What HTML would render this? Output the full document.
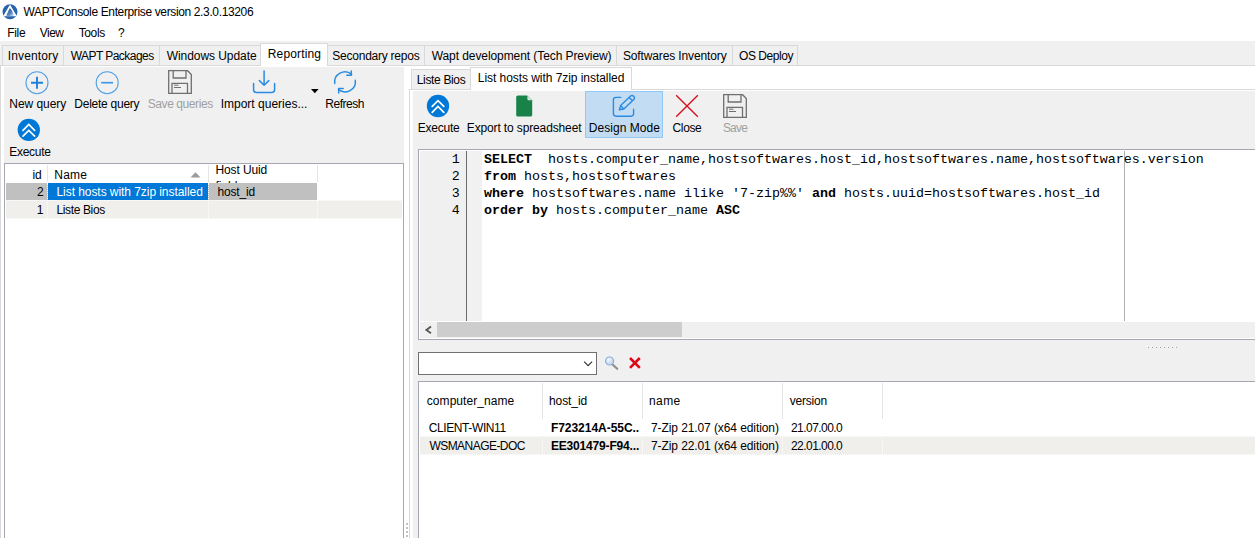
<!DOCTYPE html>
<html lang="en"><head><meta charset="utf-8"><title>WAPTConsole Enterprise version 2.3.0.13206</title>
<style>
html,body{margin:0;padding:0}
body{width:1255px;height:538px;overflow:hidden;background:#fff;position:relative;font:12px/20px "Liberation Sans",sans-serif;color:#000}
.a{position:absolute;box-sizing:border-box}
.t{position:absolute;white-space:pre;height:20px;line-height:20px}
.tab{position:absolute;box-sizing:border-box;top:45px;height:21px;background:#f0f0f0;border:1px solid #d9d9d9;border-bottom:none}
.m{position:absolute;white-space:pre;font:13.333px/17px "Liberation Mono",monospace;height:17px;color:#000}
.m b{font-weight:700}
svg{position:absolute;overflow:visible}
</style></head><body>
<!-- window chrome -->
<div class="a" style="left:0;top:41px;width:1255px;height:497px;background:#f0f0f0"></div>
<svg style="left:2px;top:4px" width="17" height="16" viewBox="0 0 17 16"><defs><linearGradient id="g1" x1="0.2" y1="0" x2="1" y2="1"><stop offset="0" stop-color="#1f59a4"/><stop offset="0.55" stop-color="#4f82c0"/><stop offset="1" stop-color="#e8eff8"/></linearGradient></defs><circle cx="8" cy="7.7" r="7.5" fill="#2762aa"/><path d="M8 0.6 L1.1 12.3 L14.9 12.3 Z" fill="#fff"/><path d="M7.8 3.9 L4.3 11.6 Q8 12.6 12 11.6 L9.9 6.6 Z" fill="url(#g1)"/></svg>

<!-- main tabs -->
<div class="a" style="left:0;top:65px;width:1260px;height:480px;background:#fff;border:1px solid #d9d9d9"></div>
<div class="tab" style="left:2px;width:62px"></div>
<div class="tab" style="left:63px;width:97px"></div>
<div class="tab" style="left:159px;width:102px"></div>
<div class="tab" style="left:327px;width:98px"></div>
<div class="tab" style="left:424px;width:193px"></div>
<div class="tab" style="left:616px;width:117px"></div>
<div class="tab" style="left:732px;width:66px"></div>
<div class="a" style="left:0;top:65px;width:1260px;height:1px;background:#d9d9d9"></div>
<div class="a" style="left:260px;top:43px;width:68px;height:23px;background:#fff;border:1px solid #d9d9d9;border-bottom:none"></div>

<!-- left pane -->
<div class="a" style="left:4px;top:67px;width:400px;height:100px;background:#f0f0f0"></div>
<div class="a" style="left:4px;top:163px;width:400px;height:380px;background:#fff;border:1px solid #a5a8b3"></div>
<!-- left grid rows -->
<div class="a" style="left:47px;top:165px;width:1px;height:17px;background:#e5e5e5"></div>
<div class="a" style="left:208px;top:165px;width:1px;height:17px;background:#e5e5e5"></div>
<div class="a" style="left:317px;top:165px;width:1px;height:17px;background:#e5e5e5"></div>
<div class="a" style="left:6px;top:183px;width:311px;height:17px;background:#c0c0c0"></div>
<div class="a" style="left:48px;top:183px;width:160px;height:17px;background:#0078d7"></div>
<div class="a" style="left:6px;top:200px;width:396px;height:19px;background:#f0efec"></div><div class="a" style="left:6px;top:200px;width:396px;height:1px;background:repeating-linear-gradient(90deg,#fff 0 1px,#f0efec 1px 2px)"></div><div class="a" style="left:6px;top:218px;width:396px;height:1px;background:repeating-linear-gradient(90deg,#fff 0 1px,#f0efec 1px 2px)"></div>
<div class="a" style="left:47px;top:183px;width:1px;height:36px;border-left:1px dotted #fff"></div>
<div class="a" style="left:208px;top:183px;width:1px;height:36px;border-left:1px dotted #fff"></div>
<div class="a" style="left:317px;top:183px;width:1px;height:36px;border-left:1px dotted #fff"></div>
<div class="a" style="left:215px;top:165px;width:60px;height:18px;overflow:hidden"><div class="t" style="left:0.4px;top:-5px;letter-spacing:-0.1px">Host Uuid</div><div class="t" style="left:0.4px;top:11px">field</div></div>
<svg style="left:190px;top:172px" width="11" height="6" viewBox="0 0 11 6"><path d="M0.5 5.5 L5.5 0.3 L10.5 5.5 Z" fill="#9c9c9c"/></svg>

<!-- left toolbar icons -->
<svg style="left:25px;top:70.5px" width="24" height="24" viewBox="0 0 24 24" fill="none" stroke="#2b8be0"><circle cx="12" cy="11.7" r="11" stroke-width="1.1" stroke="#4fa0e6"/><path d="M6 11.7 H18 M12 5.8 V17.8" stroke-width="1.9" stroke="#1e80dc"/></svg>
<svg style="left:95px;top:70.5px" width="24" height="24" viewBox="0 0 24 24" fill="none"><circle cx="12.2" cy="11.7" r="11" stroke-width="1.1" stroke="#4fa0e6"/><path d="M6.2 11.7 H18" stroke-width="1.6" stroke="#3a93e3"/></svg>
<svg id="save1" style="left:168px;top:69.6px" width="24" height="24" viewBox="0 0 24 24" fill="none" stroke="#6f6f6f" stroke-width="1.3"><path d="M0.7 0.7 H19.6 L23.3 4.6 V23.3 H0.7 Z"/><path d="M5.2 0.7 V8 H18 V0.7"/><path d="M4 23.3 V13.3 H19.5 V23.3"/><path d="M6 15.2 H10.5 M6 17.5 H13" stroke-width="1"/></svg>
<svg style="left:252px;top:69.9px" width="24" height="24" viewBox="0 0 24 24" fill="none" stroke="#2b8be0" stroke-width="1.5" stroke-linecap="round" stroke-linejoin="round"><path d="M1.6 13.4 V19.4 Q1.6 22.4 4.6 22.4 H19.6 Q22.6 22.4 22.6 19.4 V13.4"/><path d="M12.1 1 V15 M7.4 10.6 L12.1 15.3 L16.8 10.6"/></svg>
<svg style="left:311px;top:89px" width="8" height="5" viewBox="0 0 8 5"><path d="M0 0 H7.6 L3.8 4.2 Z" fill="#000"/></svg>
<svg style="left:333px;top:69.6px" width="24" height="24" viewBox="0 0 24 24" fill="none" stroke="#2b8be0" stroke-width="1.5" stroke-linecap="round" stroke-linejoin="round"><path d="M1.7 13.5 A10.3 10.3 0 0 1 18.6 4.4"/><path d="M18.3 0.9 V5.3 H13.8"/><path d="M22.3 10.3 A10.3 10.3 0 0 1 5.4 19.4"/><path d="M5.7 22.9 V18.5 H10.2"/></svg>
<svg style="left:17px;top:118px" width="24" height="24" viewBox="0 0 24 24"><circle cx="11.8" cy="11.9" r="11.15" fill="#0078d7"/><path d="M6 12.3 L11.8 6.5 L17.6 12.3 M6 18.2 L11.8 12.4 L17.6 18.2" fill="none" stroke="#fff" stroke-width="1.7" stroke-linecap="round"/></svg>

<!-- right pane: inner tabs -->
<div class="a" style="left:409px;top:89px;width:860px;height:460px;background:#fff;border:1px solid #d9d9d9"></div>
<div class="a" style="left:413px;top:91px;width:850px;height:451px;background:#f0f0f0"></div>
<div class="a" style="left:411px;top:69px;width:60px;height:20px;background:#f0f0f0;border:1px solid #d9d9d9;border-bottom:none"></div>
<div class="a" style="left:470px;top:67px;width:162px;height:23px;background:#fff;border:1px solid #d9d9d9;border-bottom:none"></div>

<!-- right toolbar -->
<div class="a" style="left:585px;top:91px;width:78px;height:47px;background:#c2dcf3;border:1px solid #90c8f6"></div>
<svg style="left:426px;top:94px" width="24" height="24" viewBox="0 0 24 24"><circle cx="12" cy="12" r="11.15" fill="#0078d7"/><path d="M6.2 12.4 L12 6.6 L17.8 12.4 M6.2 18.3 L12 12.5 L17.8 18.3" fill="none" stroke="#fff" stroke-width="1.7" stroke-linecap="round"/></svg>
<svg style="left:516px;top:95px" width="17" height="22" viewBox="0 0 17 22"><path d="M1.8 0.5 H11.2 L16.2 5.5 V19.9 Q16.2 21.5 14.6 21.5 H1.8 Q0.2 21.5 0.2 19.9 V2.1 Q0.2 0.5 1.8 0.5 Z" fill="#198249"/><path d="M11.4 1 L15.7 5.3 H12.6 Q11.4 5.3 11.4 4.1 Z" fill="#d6ebdf"/></svg>
<svg style="left:612px;top:94px" width="24" height="24" viewBox="0 0 24 24" fill="none" stroke="#2b8be0" stroke-width="1.4" stroke-linecap="round" stroke-linejoin="round"><path d="M8.8 3.4 H4 Q1.4 3.4 1.4 6 V19.6 Q1.4 22.2 4 22.2 H19 Q21.6 22.2 21.6 19.6 V15.2"/><path d="M7.4 15.8 L8.6 11.6 L18.6 2 Q20.2 0.8 21.8 2.4 Q23.2 4 21.8 5.4 L11.8 15 Z M8.6 11.6 L11.8 15 M17.2 3.4 L20.4 6.8"/></svg>
<svg style="left:675px;top:94px" width="24" height="24" viewBox="0 0 24 24" fill="none" stroke="#d4101e" stroke-width="1.4"><path d="M1.2 1.2 L22.8 22.8 M22.8 1.2 L1.2 22.8"/></svg>
<svg id="save2" style="left:723px;top:94px" width="24" height="24" viewBox="0 0 24 24" fill="none" stroke="#6f6f6f" stroke-width="1.3"><path d="M0.7 0.7 H19.6 L23.3 4.6 V23.3 H0.7 Z"/><path d="M5.2 0.7 V8 H18 V0.7"/><path d="M4 23.3 V13.3 H19.5 V23.3"/><path d="M6 15.2 H10.5 M6 17.5 H13" stroke-width="1"/></svg>

<!-- editor -->
<div class="a" style="left:418px;top:149px;width:850px;height:191px;background:#fff;border:1px solid #a5a8b3"></div>
<div class="a" style="left:420px;top:151px;width:46px;height:170px;background:#f0f0f0"></div>
<div class="a" style="left:466px;top:151px;width:1px;height:170px;background:#6b6b6b"></div>
<div class="a" style="left:467px;top:151px;width:15px;height:170px;background:#f1f1f1"></div>
<div class="a" style="left:1124px;top:151px;width:1px;height:170px;background:#b0b0b0"></div>
<div class="a" style="left:420px;top:322px;width:840px;height:16px;background:#f0f0f0"></div>
<div class="a" style="left:437px;top:322px;width:245px;height:15px;background:#cdcdcd"></div>
<svg style="left:425px;top:326px" width="7" height="8" viewBox="0 0 7 8"><path d="M6 0.6 L1.4 3.9 L6 7.2" fill="none" stroke="#555" stroke-width="1.8"/></svg>
<div class="m" style="left:420.7px;top:151px;width:39px;text-align:right">1</div>
<div class="m" style="left:420.7px;top:168px;width:39px;text-align:right">2</div>
<div class="m" style="left:420.7px;top:185px;width:39px;text-align:right">3</div>
<div class="m" style="left:420.7px;top:202px;width:39px;text-align:right">4</div>
<div class="m" style="left:484px;top:151px"><b>SELECT</b>  hosts.computer_name,hostsoftwares.host_id,hostsoftwares.name,hostsoftwares.version</div>
<div class="m" style="left:484px;top:168px"><b>from</b> hosts,hostsoftwares</div>
<div class="m" style="left:484px;top:185px"><b>where</b> hostsoftwares.name ilike '7-zip%%' <b>and</b> hosts.uuid=hostsoftwares.host_id</div>
<div class="m" style="left:484px;top:202px"><b>order</b> <b>by</b> hosts.computer_name <b>ASC</b></div>

<!-- splitter grip -->
<div class="a" style="left:1147px;top:346px;width:31px;height:1px;background:repeating-linear-gradient(90deg,#fff 0 1px,#f0f0f0 1px 4px)"></div><div class="a" style="left:1148px;top:347px;width:30px;height:1px;background:repeating-linear-gradient(90deg,#a0a0a0 0 1px,#f0f0f0 1px 4px)"></div>
<div class="a" style="left:406px;top:523px;width:2px;height:16px;background:repeating-linear-gradient(180deg,#c2c2c2 0 2px,#fff 2px 4px)"></div>

<!-- search row -->
<div class="a" style="left:418px;top:352px;width:179px;height:23px;background:#fff;border:1px solid #707070"></div>
<svg style="left:583px;top:361px" width="10" height="6" viewBox="0 0 10 6"><path d="M1.1 0.6 L5.1 4.6 L9.1 0.6" fill="none" stroke="#333" stroke-width="1.15"/></svg>
<svg style="left:604px;top:356px" width="15" height="15" viewBox="0 0 15 15"><path d="M8 8 L13.2 12.8" stroke="#8d8d8d" stroke-width="2.2" stroke-linecap="round"/><defs><radialGradient id="g2" cx="0.35" cy="0.3" r="0.8"><stop offset="0" stop-color="#f4f8fd"/><stop offset="1" stop-color="#b9d0ec"/></radialGradient></defs><circle cx="5.6" cy="5" r="4" fill="url(#g2)" stroke="#8aaedc" stroke-width="1.2"/></svg>
<svg style="left:628px;top:356px" width="14" height="14" viewBox="0 0 14 14"><path d="M2 2 L11.8 11.8 M11.8 2 L2 11.8" stroke="#e0061a" stroke-width="2.6"/></svg>

<!-- results grid -->
<div class="a" style="left:418px;top:381px;width:850px;height:170px;background:#fff;border:1px solid #a5a8b3"></div>
<div class="a" style="left:542px;top:383px;width:1px;height:36px;background:#e5e5e5"></div>
<div class="a" style="left:642px;top:383px;width:1px;height:36px;background:#e5e5e5"></div>
<div class="a" style="left:782px;top:383px;width:1px;height:36px;background:#e5e5e5"></div>
<div class="a" style="left:882px;top:383px;width:1px;height:36px;background:#e5e5e5"></div>
<div class="a" style="left:420px;top:436px;width:840px;height:19px;background:#f0efec"></div><div class="a" style="left:420px;top:436px;width:840px;height:1px;background:repeating-linear-gradient(90deg,#fff 0 1px,#f0efec 1px 2px)"></div><div class="a" style="left:420px;top:454px;width:840px;height:1px;background:repeating-linear-gradient(90deg,#fff 0 1px,#f0efec 1px 2px)"></div>
<div class="a" style="left:542px;top:419px;width:1px;height:36px;border-left:1px dotted #fff"></div>
<div class="a" style="left:642px;top:419px;width:1px;height:36px;border-left:1px dotted #fff"></div>
<div class="a" style="left:782px;top:419px;width:1px;height:36px;border-left:1px dotted #fff"></div>
<div class="a" style="left:882px;top:419px;width:1px;height:36px;border-left:1px dotted #fff"></div>

<!-- text -->
<div class="t" style="left:23.5px;top:2px;letter-spacing:-0.365px;">WAPTConsole Enterprise version 2.3.0.13206</div>
<div class="t" style="left:7.3px;top:23px;letter-spacing:-0.339px;">File</div>
<div class="t" style="left:39.7px;top:23px;letter-spacing:-0.480px;">View</div>
<div class="t" style="left:78.7px;top:23px;letter-spacing:-0.386px;">Tools</div>
<div class="t" style="left:117.9px;top:23px;">?</div>
<div class="t" style="left:7.7px;top:46px;letter-spacing:0.152px;">Inventory</div>
<div class="t" style="left:70.7px;top:46px;letter-spacing:-0.548px;">WAPT Packages</div>
<div class="t" style="left:166.7px;top:46px;letter-spacing:-0.062px;">Windows Update</div>
<div class="t" style="left:267.8px;top:44px;letter-spacing:0.141px;">Reporting</div>
<div class="t" style="left:332.3px;top:46px;letter-spacing:-0.239px;">Secondary repos</div>
<div class="t" style="left:431.7px;top:46px;letter-spacing:-0.079px;">Wapt development (Tech Preview)</div>
<div class="t" style="left:622.9px;top:46px;letter-spacing:-0.128px;">Softwares Inventory</div>
<div class="t" style="left:739.0px;top:46px;letter-spacing:-0.437px;">OS Deploy</div>
<div class="t" style="left:9.3px;top:94px;letter-spacing:-0.041px;">New query</div>
<div class="t" style="left:74.3px;top:94px;letter-spacing:-0.247px;">Delete query</div>
<div class="t" style="left:147.8px;top:94px;letter-spacing:-0.428px;color:#a0a0a0;">Save queries</div>
<div class="t" style="left:220.7px;top:94px;">Import queries...</div>
<div class="t" style="left:325.3px;top:94px;letter-spacing:-0.481px;">Refresh</div>
<div class="t" style="left:9.3px;top:142px;letter-spacing:-0.286px;">Execute</div>
<div class="t" style="left:32.4px;top:165px;letter-spacing:-0.059px;">id</div>
<div class="t" style="left:54.3px;top:165px;letter-spacing:0.214px;">Name</div>
<div class="t" style="left:37.0px;top:182px;">2</div>
<div class="t" style="left:56.5px;top:182px;letter-spacing:-0.061px;color:#fff;">List hosts with 7zip installed</div>
<div class="t" style="left:217.4px;top:182px;letter-spacing:-0.137px;">host_id</div>
<div class="t" style="left:36.8px;top:200px;">1</div>
<div class="t" style="left:56.5px;top:200px;letter-spacing:-0.369px;">Liste Bios</div>
<div class="t" style="left:416.8px;top:70px;letter-spacing:-0.347px;">Liste Bios</div>
<div class="t" style="left:477.8px;top:68px;letter-spacing:-0.054px;">List hosts with 7zip installed</div>
<div class="t" style="left:417.8px;top:118px;letter-spacing:-0.253px;">Execute</div>
<div class="t" style="left:466.8px;top:118px;letter-spacing:-0.135px;">Export to spreadsheet</div>
<div class="t" style="left:588.8px;top:118px;letter-spacing:0.034px;">Design Mode</div>
<div class="t" style="left:672.5px;top:118px;letter-spacing:-0.347px;">Close</div>
<div class="t" style="left:722.9px;top:118px;letter-spacing:-0.800px;color:#a0a0a0;">Save</div>
<div class="t" style="left:426.8px;top:391px;letter-spacing:0.053px;">computer_name</div>
<div class="t" style="left:548.9px;top:391px;letter-spacing:-0.054px;">host_id</div>
<div class="t" style="left:648.9px;top:391px;letter-spacing:0.450px;">name</div>
<div class="t" style="left:789.7px;top:391px;letter-spacing:-0.192px;">version</div>
<div class="t" style="left:428.7px;top:418px;letter-spacing:-0.390px;">CLIENT-WIN11</div>
<div class="t" style="left:550.9px;top:418px;letter-spacing:-0.031px;font-weight:700;">F723214A-55C..</div>
<div class="t" style="left:651.0px;top:418px;letter-spacing:-0.091px;">7-Zip 21.07 (x64 edition)</div>
<div class="t" style="left:791.0px;top:418px;letter-spacing:-0.549px;">21.07.00.0</div>
<div class="t" style="left:429.4px;top:436px;letter-spacing:-0.542px;">WSMANAGE-DOC</div>
<div class="t" style="left:550.9px;top:436px;letter-spacing:-0.172px;font-weight:700;">EE301479-F94...</div>
<div class="t" style="left:651.0px;top:436px;letter-spacing:-0.091px;">7-Zip 22.01 (x64 edition)</div>
<div class="t" style="left:791.0px;top:436px;letter-spacing:-0.549px;">22.01.00.0</div>
</body></html>
